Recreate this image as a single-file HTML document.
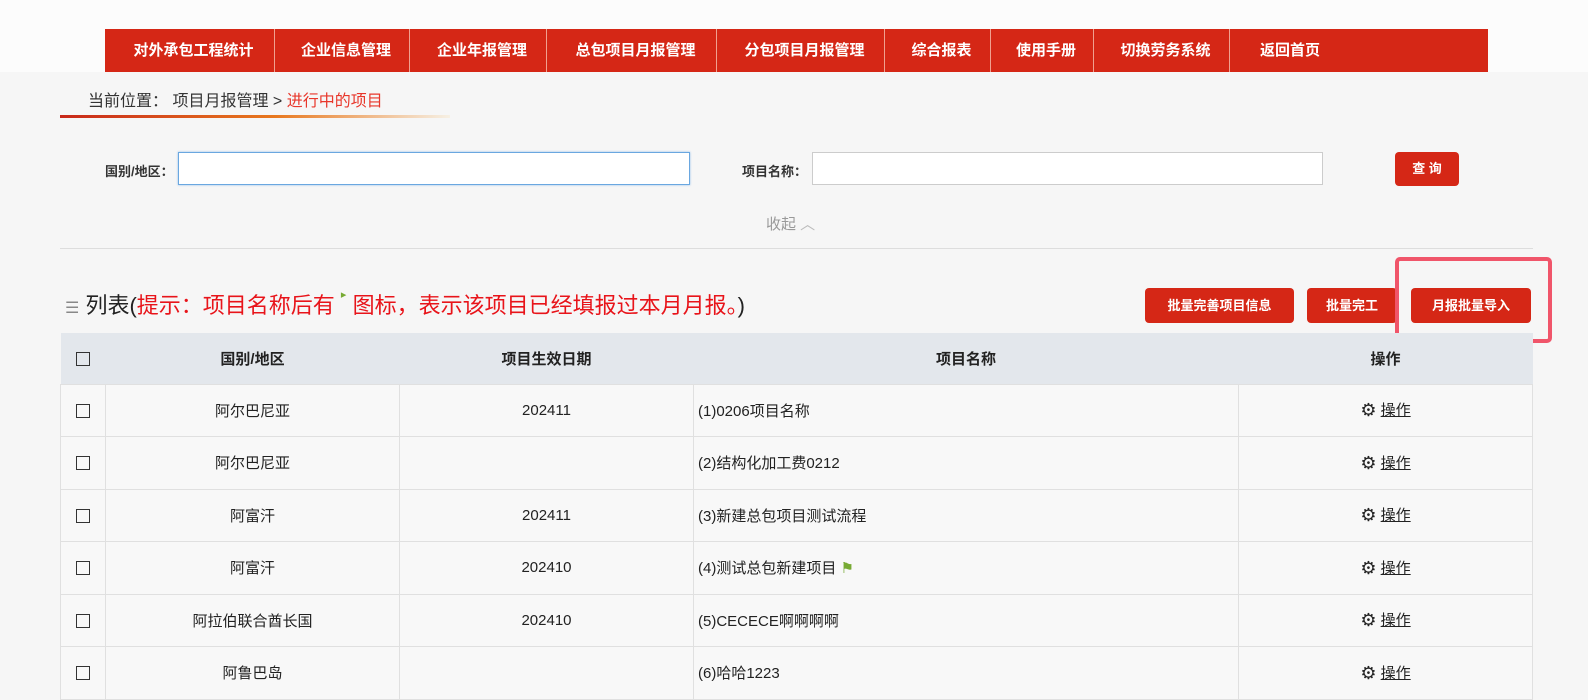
<!DOCTYPE html>
<html><head><meta charset="utf-8"><style>
*{margin:0;padding:0;box-sizing:border-box}
body{width:1588px;height:688px;overflow:hidden;background:#f6f6f6;font-family:"Liberation Sans","Noto Sans CJK SC",sans-serif;position:relative;color:#222}
.abs{position:absolute}
.top{left:0;top:0;width:1588px;height:72px;background:#fcfcfc}
.nav{left:105px;top:29px;width:1383px;height:43px;background:#d52716;display:flex}
.nav div{color:#fff;font-size:15px;font-weight:bold;line-height:43px;text-align:center;border-right:1px solid #f0a090;padding-left:8px}
.bc{left:88px;top:87px;font-size:16px;color:#333}
.bc span{color:#e8372b}
.bcl{left:60px;top:115px;width:390px;height:3px;background:linear-gradient(90deg,#c8281a,#e8781e 55%,#f6f0e4)}
.lbl{font-size:13px;color:#333;font-weight:bold}
.inp{background:#fff;border:1px solid #ccc;height:33px}
.btn{background:#d52716;color:#fff;font-size:13px;text-align:center;border-radius:4px;font-weight:bold}
table{position:absolute;left:60px;top:333px;width:1473px;border-collapse:collapse;font-size:15px}
th{background:#e3e7ec;height:51px;font-weight:bold;font-size:15px}
td{height:52.5px;border:1px solid #e0e0e0;text-align:center;background:#f8f8f8}
td.l{text-align:left;padding-left:4px}
.cb{display:inline-block;width:14px;height:14px;border:1.5px solid #333;vertical-align:middle}
.op{text-decoration:underline;color:#222}
.g{font-size:18px;vertical-align:-1px}
</style></head><body>
<div class="abs top"></div>
<div class="abs nav">
<div style="width:170px">对外承包工程统计</div>
<div style="width:135px">企业信息管理</div>
<div style="width:137px">企业年报管理</div>
<div style="width:170px">总包项目月报管理</div>
<div style="width:168px">分包项目月报管理</div>
<div style="width:106px">综合报表</div>
<div style="width:103px">使用手册</div>
<div style="width:136px">切换劳务系统</div>
<div style="width:258px;border:none;text-align:left;padding-left:30px">返回首页</div>
</div>
<div class="abs bc">当前位置： 项目月报管理 &gt; <span>进行中的项目</span></div>
<div class="abs bcl"></div>
<div class="abs lbl" style="left:105px;top:161px">国别/地区：</div>
<div class="abs inp" style="left:178px;top:152px;width:512px;border:1px solid #6aa7e0;box-shadow:0 0 2px #8bbbea"></div>
<div class="abs lbl" style="left:742px;top:161px">项目名称：</div>
<div class="abs inp" style="left:812px;top:152px;width:511px"></div>
<div class="abs btn" style="left:1395px;top:152px;width:64px;height:34px;line-height:34px">查 询</div>
<div class="abs" style="left:766px;top:213px;font-size:15px;color:#999">收起 <span style="color:#bbb">︿</span></div>
<div class="abs" style="left:60px;top:248px;width:1473px;height:1px;background:#ddd"></div>
<div class="abs" style="left:65px;top:288px;font-size:22px;color:#222"><span style="color:#888;font-size:16px">☰</span> 列表(<span style="color:#e8141a">提示：项目名称后有 <span style="color:#7a3;font-size:11px;vertical-align:top">▸</span> 图标，表示该项目已经填报过本月月报。</span>)</div>
<div class="abs btn" style="left:1145px;top:288px;width:149px;height:35px;line-height:35px">批量完善项目信息</div>
<div class="abs btn" style="left:1307px;top:288px;width:90px;height:35px;line-height:35px">批量完工</div>
<div class="abs btn" style="left:1411px;top:288px;width:120px;height:35px;line-height:35px">月报批量导入</div>
<div class="abs" style="left:1395px;top:257px;width:157px;height:86px;border:4px solid #f0556a;border-radius:5px"></div>
<table>
<tr><th style="width:45px"><span class="cb"></span></th><th style="width:294px">国别/地区</th><th style="width:294px">项目生效日期</th><th style="width:545px">项目名称</th><th>操作</th></tr>
<tr><td><span class="cb"></span></td><td>阿尔巴尼亚</td><td>202411</td><td class="l">(1)0206项目名称</td><td><span class="g">⚙</span> <span class="op">操作</span></td></tr>
<tr><td><span class="cb"></span></td><td>阿尔巴尼亚</td><td></td><td class="l">(2)结构化加工费0212</td><td><span class="g">⚙</span> <span class="op">操作</span></td></tr>
<tr><td><span class="cb"></span></td><td>阿富汗</td><td>202411</td><td class="l">(3)新建总包项目测试流程</td><td><span class="g">⚙</span> <span class="op">操作</span></td></tr>
<tr><td><span class="cb"></span></td><td>阿富汗</td><td>202410</td><td class="l">(4)测试总包新建项目 <span style="color:#7a3">⚑</span></td><td><span class="g">⚙</span> <span class="op">操作</span></td></tr>
<tr><td><span class="cb"></span></td><td>阿拉伯联合酋长国</td><td>202410</td><td class="l">(5)CECECE啊啊啊啊</td><td><span class="g">⚙</span> <span class="op">操作</span></td></tr>
<tr><td><span class="cb"></span></td><td>阿鲁巴岛</td><td></td><td class="l">(6)哈哈1223</td><td><span class="g">⚙</span> <span class="op">操作</span></td></tr>
</table>
</body></html>
